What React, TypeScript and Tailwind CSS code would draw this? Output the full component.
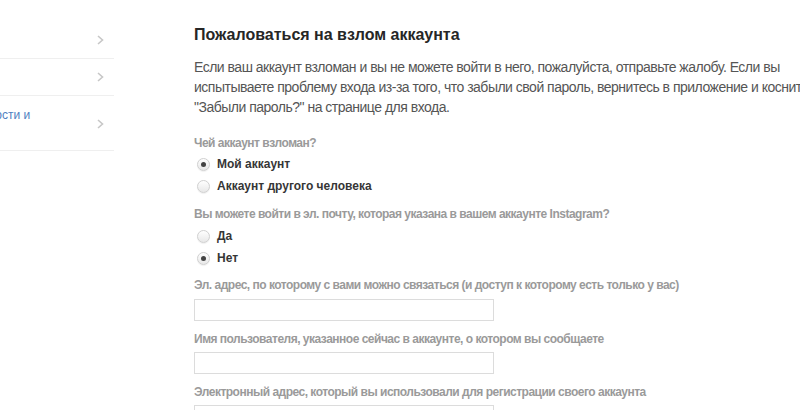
import React from "react";

const Chevron = () => (
  <svg width="7" height="10" viewBox="0 0 7 10" className="shrink-0">
    <path d="M1 1 L5.5 5 L1 9" fill="none" stroke="#c7c7c7" strokeWidth="1.6" />
  </svg>
);

const Radio = ({ checked, label }: { checked?: boolean; label: string }) => (
  <div className="flex h-[22px] items-center">
    <span className="ml-[3px] flex h-[13px] w-[13px] items-center justify-center rounded-full border border-[#d0d0d0] bg-gradient-to-b from-white to-[#e8e8e8] shadow-[0_1px_1px_rgba(0,0,0,0.06)]">
      {checked && <span className="h-[5px] w-[5px] rounded-full bg-[#444]" />}
    </span>
    <span className="ml-[7px] text-[12px] font-bold text-[#363636]">{label}</span>
  </div>
);

const Label = ({ children, className = "" }: { children: React.ReactNode; className?: string }) => (
  <div className={"text-[12px] font-bold leading-[16px] tracking-[-0.5px] text-[#9a9a9a] " + className}>{children}</div>
);

const Input = () => (
  <div className="h-[22px] w-[300px] border border-[#dcdcdc] bg-white" />
);

export default function App() {
  return (
    <div
      className="flex h-[410px] w-[800px] overflow-hidden bg-white"
      style={{ fontFamily: '"Liberation Sans", Arial, sans-serif' }}
    >
      <div className="w-[114px] shrink-0 overflow-hidden pt-[21px]">
        <div className="ml-[-126px] w-[240px]">
          <div className="flex h-[38px] items-center justify-end border-b border-[#efefef] pr-[10px]">
            <Chevron />
          </div>
          <div className="flex h-[37px] items-center justify-end border-b border-[#efefef] pr-[10px]">
            <Chevron />
          </div>
          <div className="flex h-[55px] items-center justify-between border-b border-[#efefef] pl-[24px] pr-[10px]">
            <div className="text-[12px] leading-[16px] text-[#4f7fbf]">
              Конфиденциальности и
              <br />
              безопасность
            </div>
            <div className="pt-[2px]">
              <Chevron />
            </div>
          </div>
        </div>
      </div>
      <div className="ml-[80px] w-[640px] shrink-0 pt-[25px]">
        <h1 className="text-[16px] font-bold leading-[20px] text-[#262626]">
          Пожаловаться на взлом аккаунта
        </h1>
        <p className="mt-[12px] text-[14px] leading-[20px] tracking-[-0.5px] text-[#555555]">
          Если ваш аккаунт взломан и вы не можете войти в него, пожалуйста, отправьте жалобу. Если вы
          испытываете проблему входа из-за того, что забыли свой пароль, вернитесь в приложение и коснитесь
          "Забыли пароль?" на странице для входа.
        </p>
        <Label className="mt-[18px]">Чей аккаунт взломан?</Label>
        <div className="mt-[2px]">
          <Radio checked label="Мой аккаунт" />
          <Radio label="Аккаунт другого человека" />
        </div>
        <Label className="mt-[9px]">Вы можете войти в эл. почту, которая указана в вашем аккаунте Instagram?</Label>
        <div className="mt-[3px]">
          <Radio label="Да" />
          <Radio checked label="Нет" />
        </div>
        <Label className="mt-[8px]">Эл. адрес, по которому с вами можно связаться (и доступ к которому есть только у вас)</Label>
        <div className="mt-[6px]">
          <Input />
        </div>
        <Label className="mt-[10px]">Имя пользователя, указанное сейчас в аккаунте, о котором вы сообщаете</Label>
        <div className="mt-[5px]">
          <Input />
        </div>
        <Label className="mt-[10px]">Электронный адрес, который вы использовали для регистрации своего аккаунта</Label>
        <div className="mt-[5px]">
          <Input />
        </div>
      </div>
    </div>
  );
}
